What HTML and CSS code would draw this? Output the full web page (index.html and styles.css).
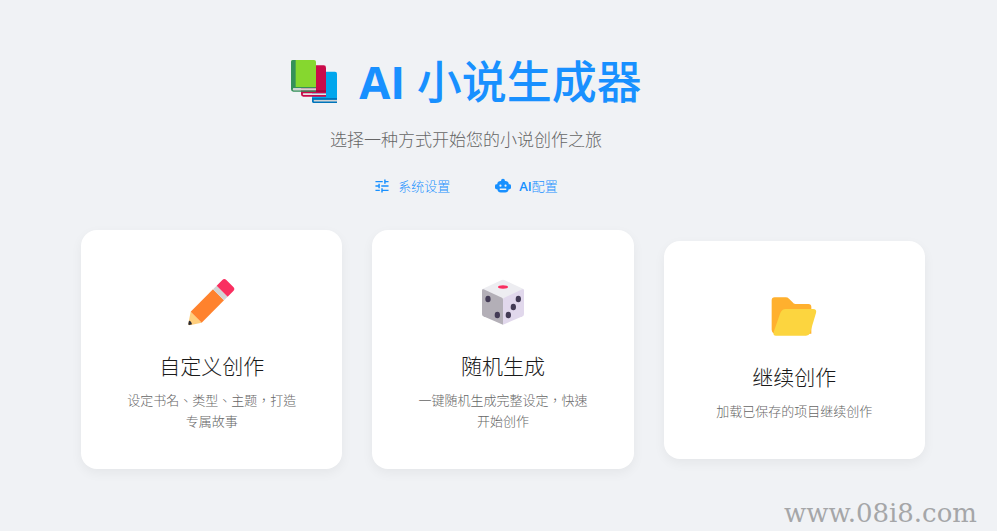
FILE: index.html
```html
<!DOCTYPE html>
<html lang="zh-Hant">
<head>
    <meta charset="UTF-8">
    <meta name="viewport" content="width=device-width, initial-scale=1.0">
    <title>AI 小说生成器</title>
    <link rel="stylesheet" href="styles.css">
</head>
<body>

    <header class="header">
        <h1 class="title">
            <svg class="title-icon" viewBox="21 15 144 144" aria-hidden="true">
                <path fill="#0084ce" d="M87 130h75v18q0 2-3 2H92q-5 0-5-6z"/>
                <path fill="#00a6ed" d="M92 56h64q6 0 6 6v74H87V62q0-6 5-6z"/>
                <path fill="#d3d3d3" d="M92 140h70v6H92z"/>
                <path fill="#0074ba" d="M87 135h75v5H92q-3 3 0 6h70v3q0 1-3 1H94q-7 0-7-8z"/>
                <path fill="#ca0b4a" d="M60 37h62q7 0 7 7v74H54V44q0-7 6-7z"/>
                <path fill="#990838" d="M54 112h75v5H54z"/>
                <path fill="#e6e6e6" d="M59 121h70v5H59z"/>
                <path fill="#ca0b4a" d="M54 116h75v5H61q-4 2 0 5h68v5H61q-7 0-7-7z"/>
                <path fill="#86d72f" d="M30 21h63q6 0 6 6v76H24V27q0-6 6-6z"/>
                <path fill="#359159" d="M30 21h8v81h61v4H31q-3 3 0 6h68v4H31q-7 0-7-7V27q0-6 6-6z"/>
                <path fill="#d3d3d3" d="M31 106h68v6H31q-3-3 0-6z"/>
            </svg>
            <span><b>AI</b> 小说生成器</span>
        </h1>
        <p class="subtitle">选择一种方式开始您的小说创作之旅</p>
        <nav class="links">
            <a class="link" href="#settings">
                <svg class="link-icon" viewBox="1 1 22 22" aria-hidden="true">
                    <path fill="currentColor" d="M3 17v2h6v-2H3zM3 5v2h10V5H3zm10 16v-2h8v-2h-8v-2h-2v6h2zM7 9v2H3v2h4v2h2V9H7zm14 4v-2H11v2h10zm-6-4h2V7h4V5h-4V3h-2v6z"/>
                </svg>
                系统设置
            </a>
            <a class="link" href="#ai-config">
                <svg class="link-icon" viewBox="1 1 22 22" aria-hidden="true">
                    <path fill="currentColor" fill-rule="evenodd" d="M12 2a2.500 2.500 0 0 1 2.500 3H15a5 5 0 0 1 5 4.500h1q2 0 2 2v3q0 2-2 2h-1.200Q19 21 15 21H9q-4 0-4.800-4.500H3q-2 0-2-2v-3q0-2 2-2h1A5 5 0 0 1 9 5h.500A2.500 2.500 0 0 1 12 2zM8.500 10a1.500 1.500 0 1 0 0 3 1.500 1.500 0 0 0 0-3zm7 0a1.500 1.500 0 1 0 0 3 1.500 1.500 0 0 0 0-3zM7.500 15.500v2h9v-2z"/>
                </svg>
                <span><b>AI</b>配置</span>
            </a>
        </nav>
    </header>

    <main class="cards">
        <a class="card" href="#custom">
            <svg class="card-icon" viewBox="22 24 144 144" aria-hidden="true">
                <path fill="#ffce7c" d="M30 125l33 33-36 8q-5 0-4-5z"/>
                <path fill="#2b2b33" d="M25 152q7 1 9 11l-8 2q-4 0-3-4z"/>
                <path fill="#ff822d" d="M97 58l33 33-67 67-33-33z"/>
                <path fill="#d3d3d3" d="M97 58l11-11 33 33-11 11z"/>
                <path fill="#f92f60" d="M108 47l17-17q6-6 12 0l21 21q6 6 0 12l-17 17z"/>
            </svg>
            <h2 class="card-title">自定义创作</h2>
            <p class="card-desc">设定书名、类型、主题，打造专属故事</p>
        </a>
        <a class="card" href="#random">
            <svg class="card-icon" viewBox="12 19 144 144" aria-hidden="true">
                <path fill="#ededf1" d="M80 25q4-2 8 0l56 26q3 2 0 5L84 86 24 56q-3-3 0-5z"/>
                <path fill="#b3afb7" d="M21 56q0-5 5-3l55 25q3 2 3 6v75L25 134q-4-2-4-7z"/>
                <path fill="#e1d8ec" d="M84 84q0-4 4-6l54-25q5-2 5 3v71q0 5-4 7l-59 25z"/>
                <ellipse fill="#f92f60" cx="84" cy="46" rx="15" ry="5"/>
                <g fill="#433b55">
                    <ellipse cx="39" cy="82" rx="8" ry="10"/>
                    <ellipse cx="67" cy="130" rx="8" ry="10"/>
                    <ellipse cx="130" cy="82" rx="8" ry="10"/>
                    <ellipse cx="115" cy="106" rx="8" ry="10"/>
                    <ellipse cx="100" cy="130" rx="8" ry="10"/>
                </g>
            </svg>
            <h2 class="card-title">随机生成</h2>
            <p class="card-desc">一键随机生成完整设定，快速开始创作</p>
        </a>
        <a class="card" href="#continue">
            <svg class="card-icon" viewBox="14 -4 144 144" aria-hidden="true">
                <path fill="#ffb02e" d="M28 21h33q6 0 10 4l10 10q4 6 9 6h39q9 0 9 9v80H32q-12 0-13-12V30q0-9 9-9z"/>
                <path fill="#fcd53f" d="M61 56h82q12 0 9 12l-18 60q-3 8-12 8H32q-10 0-7-11l20-57q5-12 16-12z"/>
            </svg>
            <h2 class="card-title">继续创作</h2>
            <p class="card-desc">加载已保存的项目继续创作</p>
        </a>
    </main>

    <div class="site-mark">www.08i8.com</div>

</body>
</html>
```

FILE: styles.css
```css
* { box-sizing: border-box; }
body { margin: 0; min-height: 100vh; background-color: #f0f2f5; font-family: "Open Sans", "Noto Sans CJK TC", sans-serif; font-weight: 300; color: #1a1a1a; }
h1, h2, p { margin: 0; }
a { text-decoration: none; }

.header { display: flex; flex-direction: column; align-items: center; padding: 50px 65px 32px 0; }
.title { display: flex; align-items: center; gap: 21px; font-size: 45px; line-height: 64px; font-weight: 500; color: #1890ff; }
.title b { font-weight: 700; }
.title-icon { width: 48px; height: 48px; }
.subtitle { margin-top: 12px; font-size: 17px; line-height: 28px; color: #666; }
.links { display: flex; gap: 45px; margin-top: 20px; }
.link { display: flex; align-items: center; gap: 8px; font-size: 13px; line-height: 24px; color: #1890ff; }
.link b { font-weight: 600; }
.link-icon { width: 16px; height: 16px; }

.cards { display: flex; align-items: center; gap: 30px; padding: 0 72px 60px 81px; }
.card { flex: 1; display: flex; flex-direction: column; align-items: center; padding: 36px 44px 37px; background-color: #fff; border-radius: 16px; box-shadow: 0 4px 12px rgba(0, 0, 0, 0.05); text-align: center; color: #1a1a1a; }
.card-icon { width: 48px; height: 48px; margin: 12px 0; }
.card-title { margin-top: 13px; font-size: 21px; line-height: 30px; font-weight: 300; }
.card-desc { margin-top: 9px; font-size: 13px; line-height: 21px; color: #666; }

.site-mark { position: absolute; right: 20px; bottom: 2px; font-family: "DejaVu Serif", serif; font-size: 26px; line-height: 32px; font-weight: 400; color: #a5a6a8; }
```
